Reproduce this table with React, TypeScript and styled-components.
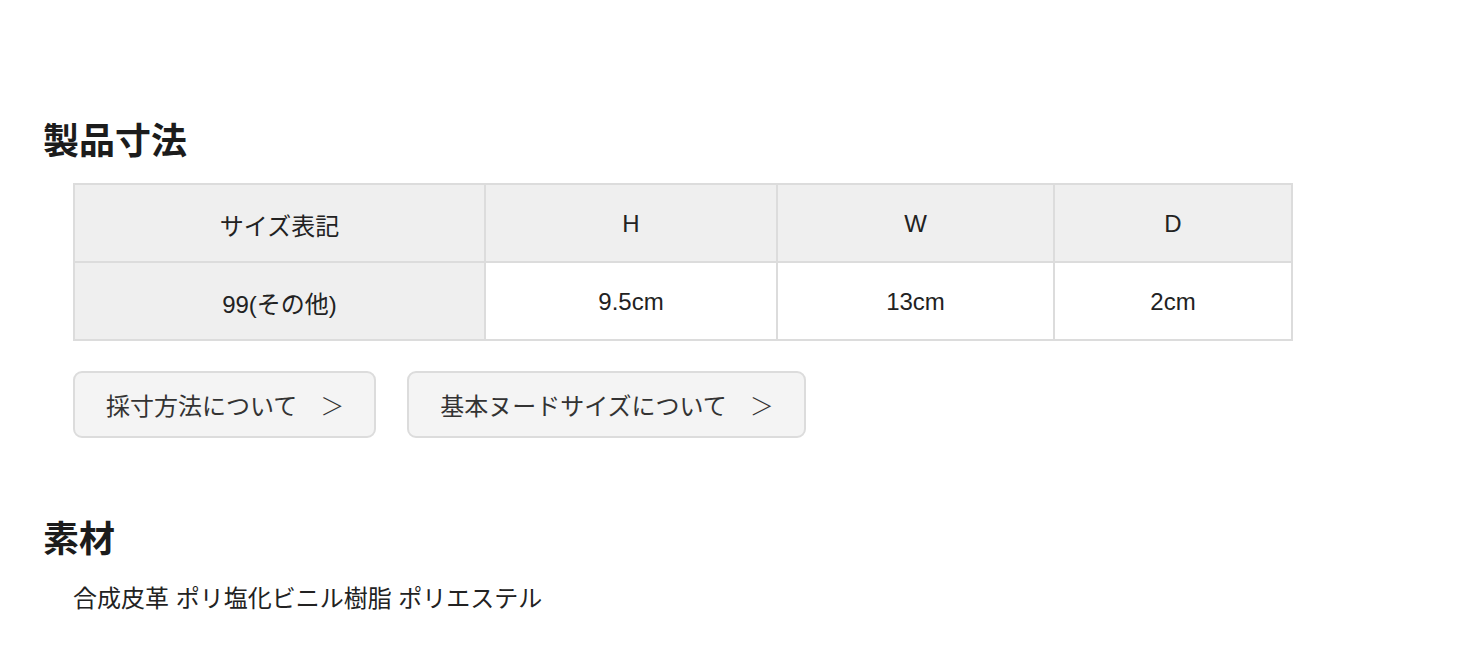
import styled, { createGlobalStyle } from "styled-components";

const GlobalStyle = createGlobalStyle`
    body {
        margin: 0;
        background: #ffffff;
        color: #222222;
        font-family: "Liberation Sans", "Noto Sans CJK JP", sans-serif;
    }
`;

const Page = styled.main`
    padding: 120px 0 40px 43px;
`;

const Heading = styled.h2<{ $top?: number }>`
    margin: ${(p) => p.$top ?? 0}px 0 0 0;
    font-size: 36px;
    line-height: 43px;
    font-weight: 700;
    color: #1c1c1c;
`;

const Section = styled.div`
    padding-left: 30px;
`;

const SizeTable = styled.table`
    margin-top: 20px;
    width: 1218px;
    border-collapse: collapse;
    table-layout: fixed;
    font-size: 24px;
    color: #222222;
`;

const Row = styled.tr<{ $h: number }>`
    height: ${(p) => p.$h}px;
`;

const Cell = styled.td<{ $shade?: boolean }>`
    padding: 2px 0 0 0;
    border: 2px solid #dcdcdc;
    text-align: center;
    vertical-align: middle;
    background: ${(p) => (p.$shade ? "#efefef" : "#ffffff")};
`;

const LinkRow = styled.div`
    margin-top: 30px;
    display: flex;
    gap: 31px;
`;

const LinkButton = styled.a`
    display: inline-flex;
    align-items: center;
    height: 63px;
    padding: 0 30px 0 31px;
    border: 2px solid #dcdcdc;
    border-radius: 9px;
    background: #f4f4f4;
    color: #333333;
    font-size: 24px;
    text-decoration: none;
    cursor: pointer;
`;

const Chevron = styled.span`
    margin-left: 23px;
    font-family: "Noto Sans CJK JP", sans-serif;
    font-weight: 300;
    color: #333333;
`;

const Material = styled.p`
    margin: 20px 0 0 0;
    font-size: 24px;
    line-height: 36px;
    color: #222222;
`;

const cols = [411, 292, 277, 238];

export default function App() {
    return (
        <>
            <GlobalStyle />
            <Page>
                <Heading>製品寸法</Heading>
                <Section>
                    <SizeTable>
                        <colgroup>
                            {cols.map((w, i) => (
                                <col key={i} style={{ width: w }} />
                            ))}
                        </colgroup>
                        <tbody>
                            <Row $h={78}>
                                <Cell $shade>サイズ表記</Cell>
                                <Cell $shade>H</Cell>
                                <Cell $shade>W</Cell>
                                <Cell $shade>D</Cell>
                            </Row>
                            <Row $h={78}>
                                <Cell $shade>99(その他)</Cell>
                                <Cell>9.5cm</Cell>
                                <Cell>13cm</Cell>
                                <Cell>2cm</Cell>
                            </Row>
                        </tbody>
                    </SizeTable>
                    <LinkRow>
                        <LinkButton>
                            採寸方法について<Chevron>＞</Chevron>
                        </LinkButton>
                        <LinkButton>
                            基本ヌードサイズについて<Chevron>＞</Chevron>
                        </LinkButton>
                    </LinkRow>
                </Section>
                <Heading $top={80}>素材</Heading>
                <Section>
                    <Material>合成皮革 ポリ塩化ビニル樹脂 ポリエステル</Material>
                </Section>
            </Page>
        </>
    );
}
